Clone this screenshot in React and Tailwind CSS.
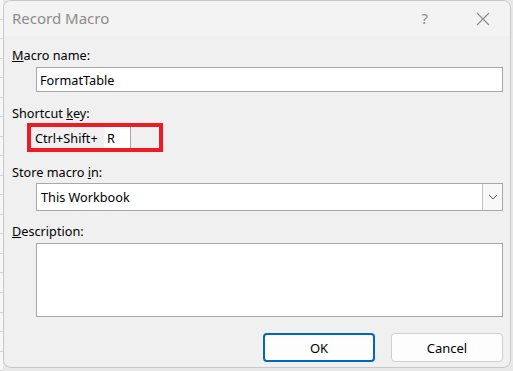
export default function App() {
  return (
    <div className="w-[513px] h-[371px] flex bg-[#e8e8e8] overflow-hidden" style={{ fontFamily: '"Noto Sans", sans-serif' }}>
      {/* sheet peeking out behind the dialog */}
      <div className="w-[3px] flex flex-col">
        {Array.from({ length: 19 }).map((_, i) => (
          <div key={i} className="h-[20px] border-b border-[#d4d4d4] bg-[#f7f7f7]" />
        ))}
      </div>

      <div className="w-[508px] h-[368px] flex flex-col rounded-[8px] border border-[#c8c8c8] bg-[#f0f0f0] overflow-hidden">
        {/* Title bar */}
        <div className="h-[35px] flex items-center bg-[#f3f3f3] pl-[8px]">
          <span className="text-[15px] text-[#8b8b8b]">Record Macro</span>
          <span className="ml-auto text-[15px] text-[#8b8b8b] mr-[48px]">?</span>
          <svg width="14" height="14" viewBox="0 0 14 14" className="mr-[20px]">
            <path d="M1 1L13 13M13 1L1 13" stroke="#8b8b8b" strokeWidth="1.1" fill="none" />
          </svg>
        </div>

        {/* Body */}
        <div className="flex flex-col pl-[8px] pr-[7px] pt-[11px] text-[12.7px] text-black leading-[16px]">
          <div><span className="underline">M</span>acro name:</div>
          <div className="ml-[24px] mt-[4px] h-[25px] bg-white border border-[#a8a8a8] flex items-center pl-[3px]">
            FormatTable
          </div>

          <div className="mt-[13px]"><span>Shortcut </span><span className="underline">k</span>ey:</div>
          <div className="ml-[15px] mt-[2px] w-[136px] h-[29px] border-[4px] border-[#ec1c24] flex items-center">
            <span className="pl-[4px] w-[73px]">Ctrl+Shift+</span>
            <div className="w-[27px] h-full bg-white border-r border-[#a8a8a8] flex items-center pl-[3px]">R</div>
          </div>

          <div className="mt-[12px]">Store macro <span className="underline">i</span>n:</div>
          <div className="ml-[24px] mt-[3px] h-[28px] bg-white border border-[#a8a8a8] flex items-center">
            <span className="pl-[4px]">This Workbook</span>
            <div className="ml-auto w-[20px] h-full bg-[#f8f8f8] border-l border-[#c4c4c4] flex items-center justify-center">
              <svg width="10" height="6" viewBox="0 0 10 6">
                <path d="M1 1L5 5L9 1" stroke="#606060" strokeWidth="1" fill="none" />
              </svg>
            </div>
          </div>

          <div className="mt-[12px]"><span className="underline">D</span>escription:</div>
          <div className="ml-[24px] mt-[4px] h-[74px] bg-white border border-[#a8a8a8]" />

          <div className="flex justify-end gap-[16px] mt-[16px]">
            <button className="w-[112px] h-[29px] rounded-[4px] border-2 border-[#0067c0] bg-[#fdfdfd] text-[13px]">OK</button>
            <button className="w-[112px] h-[29px] rounded-[4px] border border-[#d0d0d0] bg-[#fdfdfd] text-[13px]">Cancel</button>
          </div>
        </div>
      </div>
    </div>
  )
}
